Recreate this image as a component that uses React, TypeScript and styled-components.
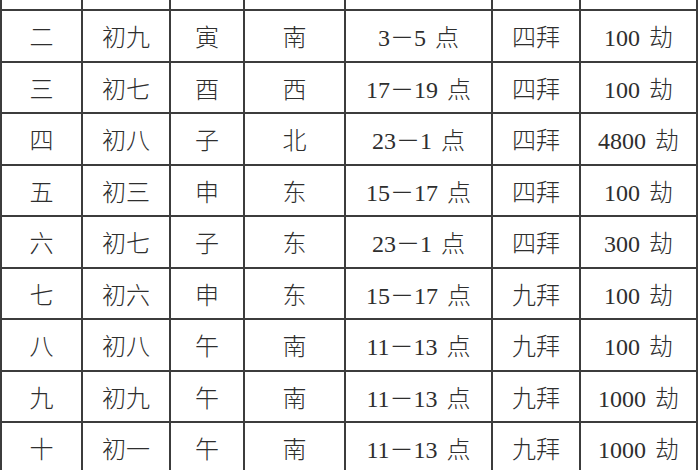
import React from 'react';
import styled, { createGlobalStyle } from 'styled-components';

const GlobalStyle = createGlobalStyle`
  html, body {
    margin: 0;
    padding: 0;
    background: #ffffff;
  }
`;

const Sheet = styled.div`
  display: grid;
  grid-template-columns: 79px 86px 72px 99px 145px 86px 115px;
  grid-template-rows: 9px repeat(9, 49.5px);
  gap: 2px;
  padding: 0 2px 2px 2px;
  width: max-content;
  background: #3c3c3c;
`;

const Cell = styled.div`
  display: flex;
  align-items: center;
  justify-content: center;
  background: #ffffff;
  color: #2e2e2e;
  font-family: "Liberation Serif", "Noto Sans CJK SC", serif;
  font-size: 24px;
  font-weight: 300;
  word-spacing: 3px;
  white-space: nowrap;
`;

const rows: string[][] = [
  ['二', '初九', '寅', '南', '3－5 点', '四拜', '100 劫'],
  ['三', '初七', '酉', '西', '17－19 点', '四拜', '100 劫'],
  ['四', '初八', '子', '北', '23－1 点', '四拜', '4800 劫'],
  ['五', '初三', '申', '东', '15－17 点', '四拜', '100 劫'],
  ['六', '初七', '子', '东', '23－1 点', '四拜', '300 劫'],
  ['七', '初六', '申', '东', '15－17 点', '九拜', '100 劫'],
  ['八', '初八', '午', '南', '11－13 点', '九拜', '100 劫'],
  ['九', '初九', '午', '南', '11－13 点', '九拜', '1000 劫'],
  ['十', '初一', '午', '南', '11－13 点', '九拜', '1000 劫'],
];

const App: React.FC = () => {
  return (
    <>
      <GlobalStyle />
      <Sheet>
        {/* the row above is cut off at the top edge */}
        {Array.from({ length: 7 }).map((_, i) => (
          <Cell key={`top-${i}`} />
        ))}
        {rows.map((row, r) =>
          row.map((text, c) => <Cell key={`${r}-${c}`}>{text}</Cell>)
        )}
      </Sheet>
    </>
  );
};

export default App;
